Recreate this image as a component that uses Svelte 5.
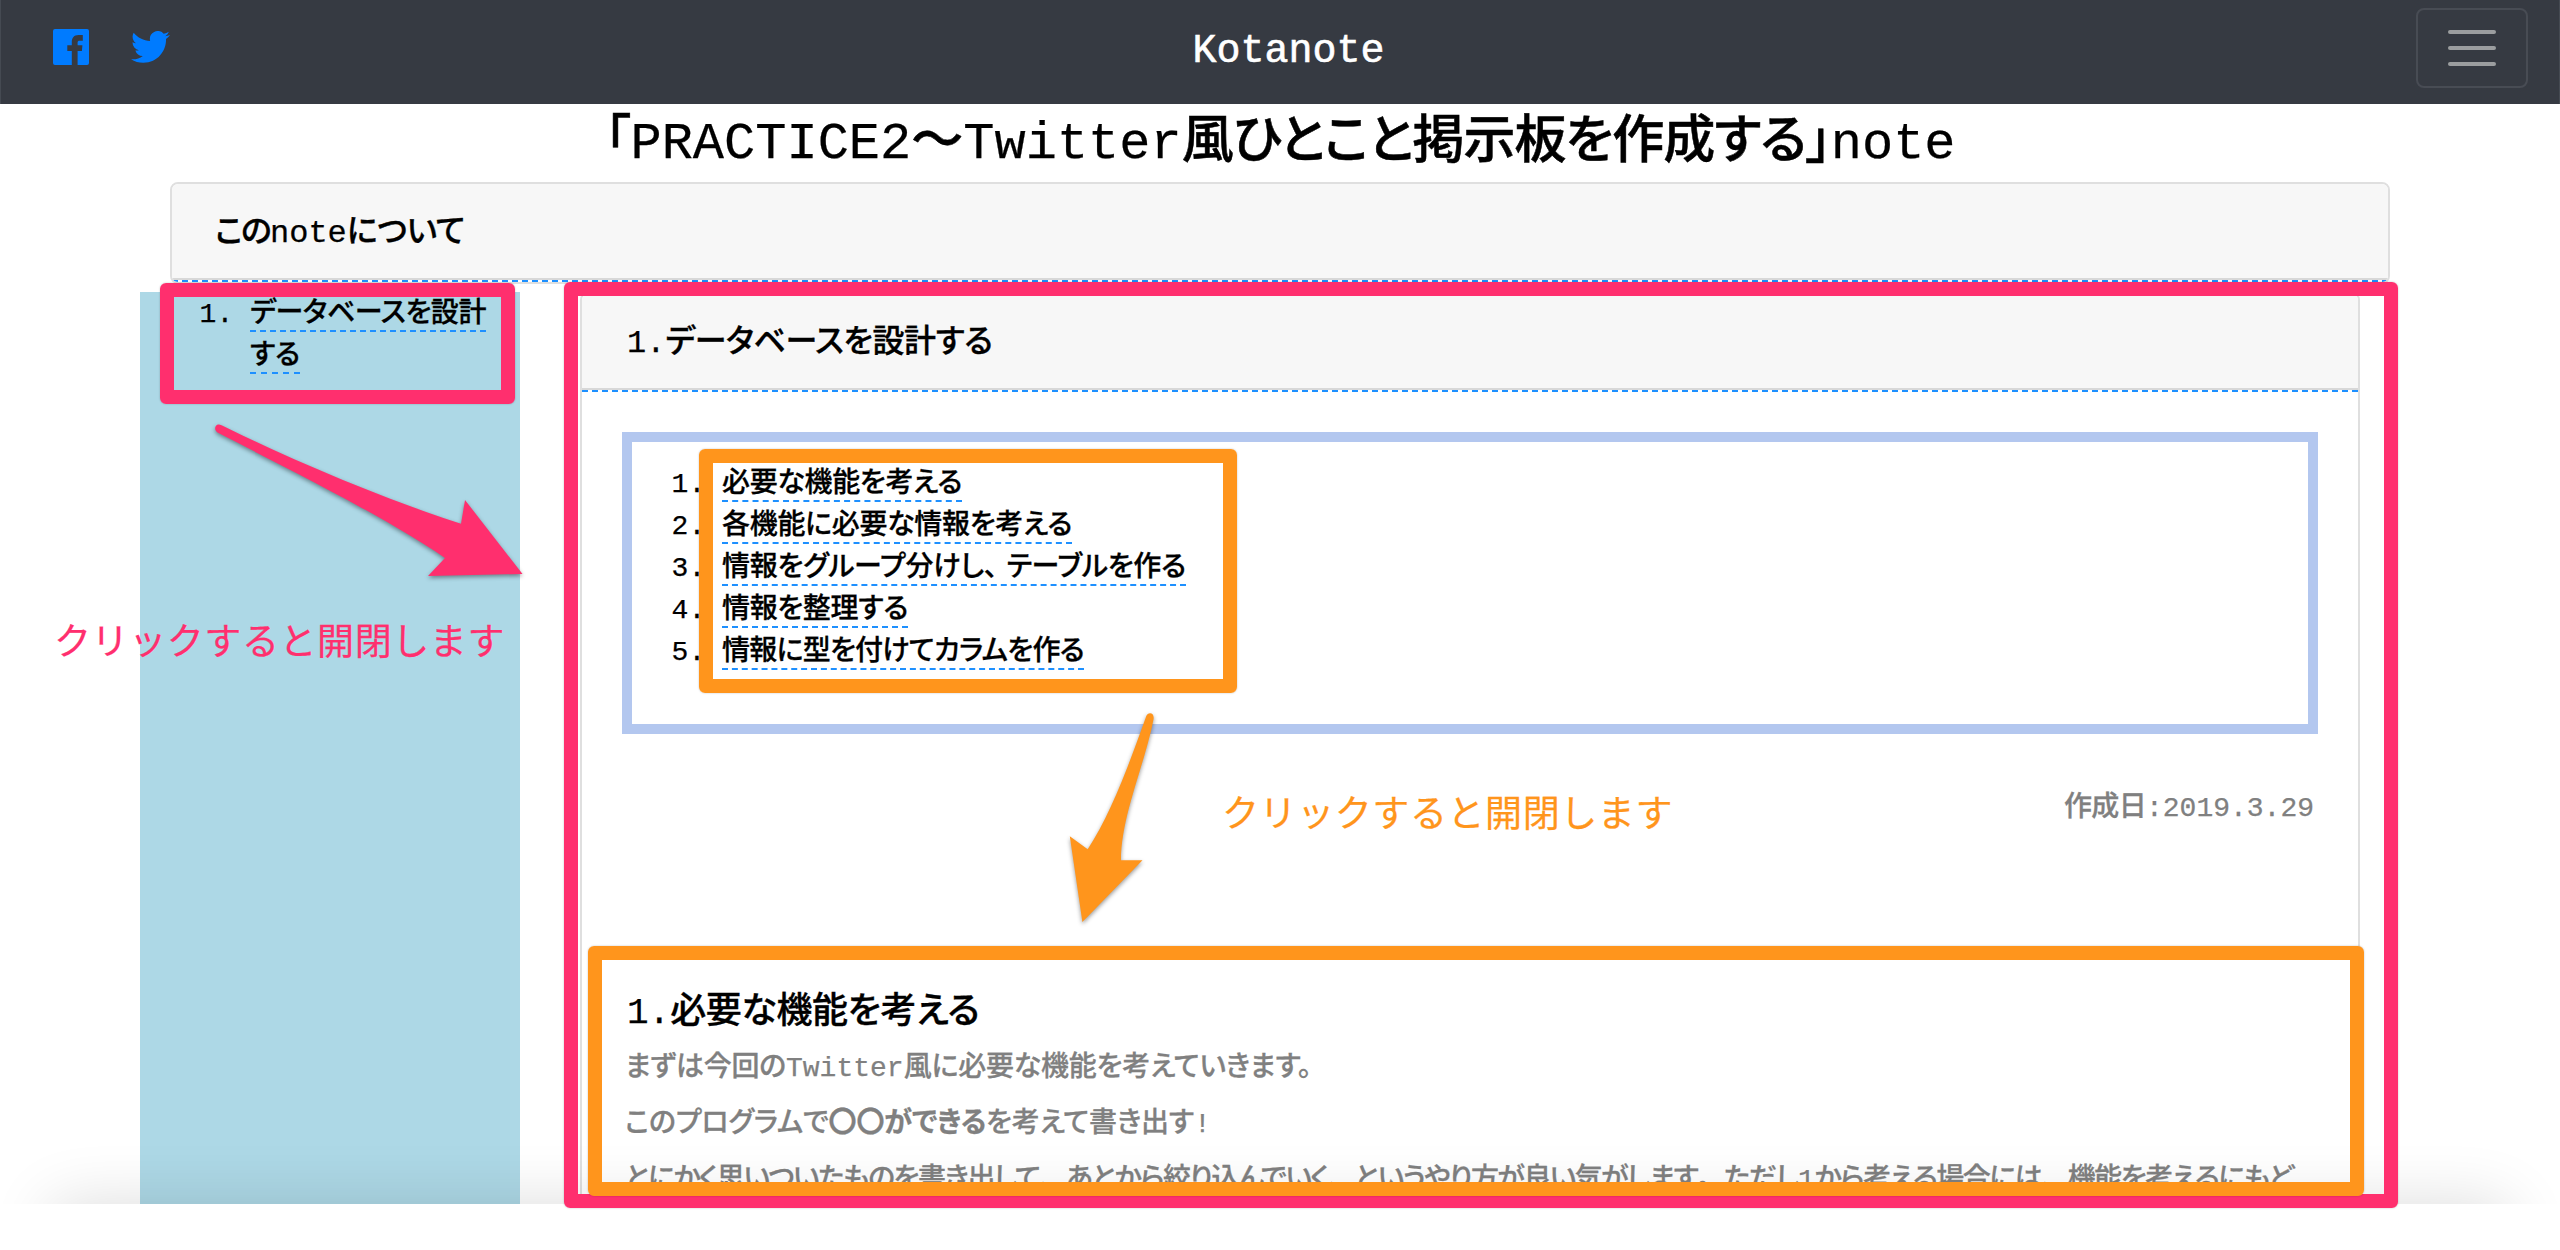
<script lang="ts">
  const topics = [
    { text: '必要な機能を考える', width: 240 },
    { text: '各機能に必要な情報を考える', width: 350 },
    { text: '情報をグループ分けし、テーブルを作る', width: 464 },
    { text: '情報を整理する', width: 186 },
    { text: '情報に型を付けてカラムを作る', width: 362 }
  ];

  const closing = 'とにかく思いついたものを書き出して、あとから絞り込んでいく、というやり方が良い気がします。ただし';
  const closingRest = 'から考える場合には、機能を考えるにもど';

  // Splits a sentence so that each punctuation mark is a piece of its own.
  const pieces = (text: string) => text.split(/([、。])/).filter(Boolean);
  const isMark = (piece: string) => piece === '、' || piece === '。';

  // Spreads the letters of a run so that it takes up the given width.
  function fit(node: HTMLElement, width: number) {
    const natural = node.getBoundingClientRect().width;
    const count = [...(node.textContent ?? '').trim()].length;
    node.style.letterSpacing = `${(width - natural) / count}px`;
  }
</script>

{#snippet sentence(text: string)}{#each pieces(text) as piece}{#if isMark(piece)}<span class="mark">{piece}</span>{:else}{piece}{/if}{/each}{/snippet}

<div class="page">
  <header class="navbar">
    <div class="social">
      <svg class="facebook" viewBox="0 0 36 36"><path d="M2 0H34a2 2 0 0 1 2 2V34a2 2 0 0 1-2 2H24.6V21.9H28.9L29.4 16.3H24.6V13.6C24.6 12.3 25.2 11.7 26.6 11.7H29.8V6H25.5C21 6 18.8 8.8 18.8 13V16.3H14.3V21.9H18.8V36H2a2 2 0 0 1-2-2V2a2 2 0 0 1 2-2z" /></svg>
      <svg class="twitter" viewBox="0 2.2 24 19.6"><path d="M23.953 4.57a10 10 0 01-2.825.775 4.958 4.958 0 002.163-2.723c-.951.555-2.005.959-3.127 1.184a4.92 4.92 0 00-8.384 4.482C7.69 8.095 4.067 6.13 1.64 3.162a4.822 4.822 0 00-.666 2.475c0 1.71.87 3.213 2.188 4.096a4.904 4.904 0 01-2.228-.616v.06a4.923 4.923 0 003.946 4.827 4.996 4.996 0 01-2.212.085 4.936 4.936 0 004.604 3.417 9.867 9.867 0 01-6.102 2.105c-.39 0-.779-.023-1.17-.067a13.995 13.995 0 007.557 2.209c9.053 0 13.998-7.496 13.998-13.985 0-.21 0-.42-.015-.63A9.935 9.935 0 0024 4.59z" /></svg>
    </div>
    <div class="brand">Kotanote</div>
    <button class="toggler" aria-label="menu">
      <span class="bar"></span><span class="bar"></span><span class="bar"></span>
    </button>
  </header>

  <h1><span class="ja" use:fit={26}>「</span>PRACTICE2<span class="ja" use:fit={52}>〜</span>Twitter<span class="ja" use:fit={649}>風ひとこと掲示板を作成する」</span>note</h1>

  <section class="card about">
    <div class="card-header"><span class="ja lead" use:fit={55}>この</span>note<span class="ja" use:fit={118}>について</span></div>
  </section>

  <div class="columns">
    <nav class="sidebar">
      <ol>
        <li><span class="link ja"><span use:fit={236}>データベースを設計</span><wbr /><span use:fit={50}>する</span></span></li>
      </ol>
    </nav>

    <main class="card chapter">
      <div class="card-header"><span class="number">1.</span><span class="ja" use:fit={327}>データベースを設計する</span></div>
      <div class="card-body">
        <div class="toc">
          <ol>
            {#each topics as topic}
              <li><span class="link ja" use:fit={topic.width}>{@render sentence(topic.text)}</span></li>
            {/each}
          </ol>
        </div>
        <p class="date"><span class="ja" use:fit={82}>作成日</span>:2019.3.29</p>
        <h2><span class="number">1.</span><span class="ja" use:fit={309}>必要な機能を考える</span></h2>
        <p><span class="ja lead" use:fit={161}>まずは今回の</span>Twitter<span class="ja" use:fit={408}>風に必要な機能を考えていきます。</span></p>
        <p><span class="ja lead" use:fit={569}>このプログラムで<b>〇〇ができる</b>を考えて書き出す</span>!</p>
        <p><span class="ja lead" use:fit={1173}>{@render sentence(closing)}</span>1<span class="ja" use:fit={478}>{@render sentence(closingRest)}</span></p>
      </div>
    </main>
    <div class="shade"></div>
  </div>

  <div class="annotations">
    <div class="frame pink frame-menu"></div>
    <div class="frame pink frame-chapter"></div>
    <div class="frame orange frame-topics"></div>
    <div class="frame orange frame-section"></div>
    <svg class="arrows" viewBox="0 0 2560 1250">
      <path class="arrow-pink" d="M222.6 425.8C300 464 390 501 461 523.7L465 500L522.5 574L428 576L445 558C390 520 310 480 217.5 432.5C213.5 430 215 424 219 424.5Q221 424.8 222.6 425.8z" />
      <path class="arrow-orange" d="M1146.3 716C1147.5 712 1154.5 711.5 1153.6 719C1145 764 1121 816 1121 860.3L1142.5 860.3L1082.4 922L1069.8 836.3L1087.7 849.3C1109 817 1126 773 1146.3 716z" />
    </svg>
    <div class="note note-pink"><span use:fit={451}>クリックすると開閉します</span></div>
    <div class="note note-orange"><span use:fit={451}>クリックすると開閉します</span></div>
  </div>
</div>

<style>
  :global(body) {
    margin: 0;
    background: #fff;
  }
  .page {
    position: relative;
    width: 2560px;
    height: 1250px;
    overflow: hidden;
    box-sizing: border-box;
    color: #000;
    background: #fff;
    font-family: 'Liberation Mono', 'Noto Sans CJK JP', monospace;
    font-feature-settings: 'palt';
    font-size: 28px;
    line-height: 42px;
    white-space: nowrap;
    -webkit-text-stroke: 0.25px currentColor;
  }
  .page * {
    box-sizing: border-box;
  }
  .ja {
    font-weight: 500;
    -webkit-text-stroke: 0.01em currentColor;
  }
  .lead {
    margin-left: 3px;
  }
  .number {
    margin-left: 5px;
  }
  .mark {
    font-feature-settings: normal;
  }
  .link .mark {
    margin-right: -5px;
  }
  .navbar {
    display: grid;
    grid-template-columns: 1fr auto 1fr;
    height: 104px;
    padding: 8px 31px 0 52px;
    background: #363a42;
    border: 0 solid #454a52;
    border-width: 0 1px;
  }
  .social {
    display: flex;
    gap: 42px;
    padding-top: 21px;
    fill: #007bff;
  }
  .facebook {
    width: 36px;
    height: 36px;
  }
  .twitter {
    width: 39px;
    height: 32px;
    margin-top: 2px;
  }
  .brand {
    padding: 14px 0 0 0;
    margin-left: -4px;
    color: #fff;
    font-size: 40px;
    line-height: 60px;
    -webkit-text-stroke: 0.6px #fff;
  }
  .toggler {
    display: flex;
    flex-direction: column;
    align-items: center;
    gap: 12px;
    justify-self: end;
    width: 112px;
    height: 80px;
    padding: 20px 0 0;
    background: none;
    border: 2px solid #484c54;
    border-radius: 8px;
  }
  .bar {
    width: 48px;
    height: 4px;
    border-radius: 2px;
    background: #9b9d9f;
  }
  h1 {
    height: 78px;
    margin: 0;
    padding-top: 2px;
    text-align: center;
    font-size: 52px;
    font-weight: 500;
    line-height: 78px;
  }
  .card {
    border: 2px solid #dfdfdf;
    border-radius: 8px;
    background: #fff;
    overflow: hidden;
  }
  .about {
    width: 2220px;
    height: 102px;
    margin: 0 170px 8px;
  }
  .card-header {
    height: 98px;
    padding: 26px 40px 0;
    background:
      linear-gradient(#d8d8d8, #d8d8d8) 0 94px / 100% 2px no-repeat,
      linear-gradient(#f7f7f7, #f7f7f7) 0 0 / 100% 94px no-repeat;
    border-bottom: 2px dashed #1e90ff;
    font-size: 32px;
    line-height: 48px;
  }
  .columns {
    position: relative;
    display: flex;
    gap: 60px;
    height: 912px;
    padding-left: 140px;
    overflow: hidden;
  }
  .sidebar {
    width: 380px;
    padding: 2px 20px 0 110px;
    background: #add8e6;
    white-space: normal;
  }
  ol {
    margin: 0;
    padding: 0;
  }
  .link {
    border-bottom: 2px dashed #1e90ff;
  }
  .chapter {
    width: 1780px;
    height: 1000px;
  }
  .card-body {
    padding: 40px;
  }
  .toc {
    height: 302px;
    padding: 22px 0 0 90px;
    border: 10px solid #b3c7ef;
  }
  p {
    margin: 0 0 14px;
    color: #808080;
  }
  .date {
    padding: 54px 4px 0 0;
    margin-bottom: 162px;
    text-align: right;
  }
  h2 {
    margin: 0 0 12px;
    font-size: 36px;
    font-weight: 500;
    line-height: 44px;
  }
  .shade {
    position: absolute;
    top: 912px;
    left: 52px;
    width: 2456px;
    height: 100px;
    box-shadow: 0 0 64px rgba(0, 0, 0, 0.14);
  }
  .annotations {
    position: absolute;
    inset: 0;
  }
  .frame {
    position: absolute;
    border: 14px solid;
    border-radius: 6px;
    box-shadow: 0 0 2px rgba(0, 0, 0, 0.25);
  }
  .pink {
    border-color: #ff2f6e;
  }
  .orange {
    border-color: #ff951c;
  }
  .frame-menu {
    left: 160px;
    top: 283px;
    width: 355px;
    height: 121px;
  }
  .frame-chapter {
    left: 564px;
    top: 282px;
    width: 1834px;
    height: 926px;
  }
  .frame-topics {
    left: 699px;
    top: 449px;
    width: 538px;
    height: 244px;
  }
  .frame-section {
    left: 588px;
    top: 946px;
    width: 1776px;
    height: 250px;
  }
  .arrows {
    position: absolute;
    inset: 0;
    width: 2560px;
    height: 1250px;
    filter: drop-shadow(0 2px 2px rgba(0, 0, 0, 0.4));
  }
  .arrow-pink {
    fill: #ff2f6e;
  }
  .arrow-orange {
    fill: #ff951c;
  }
  .note {
    position: absolute;
    font-family: 'Noto Sans CJK JP', sans-serif;
    font-feature-settings: normal;
    font-size: 37px;
    line-height: 56px;
  }
  .note-pink {
    left: 54px;
    top: 611px;
    color: #ff2f6e;
    -webkit-text-stroke: 0.25px #ff2f6e;
  }
  .note-orange {
    left: 1222px;
    top: 783px;
    color: #ff951c;
    -webkit-text-stroke: 0.25px #ff951c;
  }
</style>
